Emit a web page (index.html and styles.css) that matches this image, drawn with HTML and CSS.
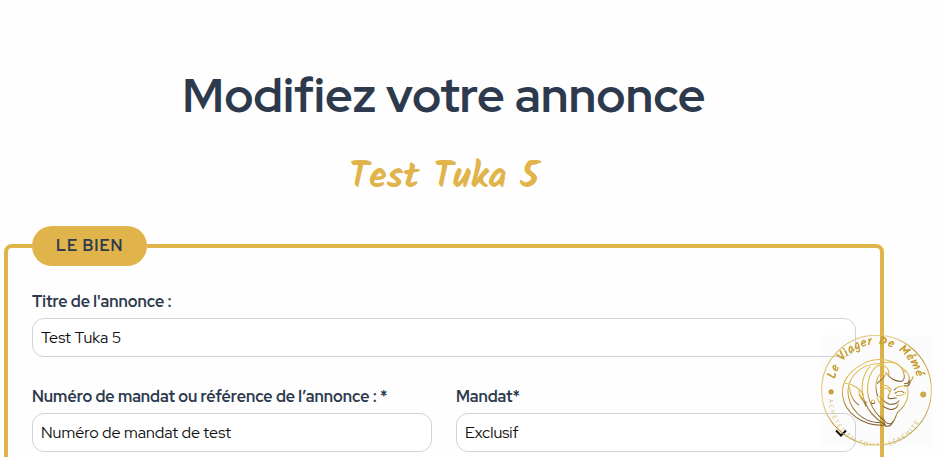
FILE: index.html
```html
<!DOCTYPE html>
<html lang="fr">
<head>
<meta charset="utf-8">
<meta name="viewport" content="width=device-width, initial-scale=1">
<title>Modifiez votre annonce</title>
<link rel="stylesheet" href="styles.css">
</head>
<body>
<main class="page">
  <h1 class="title">Modifiez votre annonce</h1>
  <h2 class="subtitle">Test Tuka 5</h2>
  <form>
    <fieldset class="section">
      <legend class="badge">LE BIEN</legend>
      <div class="grid">
        <div class="field wide">
          <label for="titre">Titre de l'annonce :</label>
          <input class="control" id="titre" type="text" value="Test Tuka 5">
        </div>
        <div class="field">
          <label for="numero">Numéro de mandat ou référence de l’annonce : *</label>
          <input class="control" id="numero" type="text" value="Numéro de mandat de test">
        </div>
        <div class="field">
          <label for="mandat">Mandat*</label>
          <div class="picker">
            <select class="control" id="mandat"><option>Exclusif</option><option>Simple</option></select>
            <svg class="chevron" viewBox="0 0 12 8" aria-hidden="true"><path d="M1 1.5 L6 6.5 L11 1.5"/></svg>
          </div>
        </div>
      </div>
    </fieldset>
  </form>
</main>
<svg class="logo" viewBox="34 33 330 330" role="img" aria-label="Le Viager De Mémé">
  <defs>
    <linearGradient id="gold" x1="0" y1="0" x2="1" y2="1">
      <stop offset="0" stop-color="#c9a63a"/><stop offset=".3" stop-color="#ead080"/>
      <stop offset=".5" stop-color="#b58a25"/><stop offset=".75" stop-color="#e2c45f"/><stop offset="1" stop-color="#8f7436"/>
    </linearGradient>
    <linearGradient id="shade" x1="0" y1="0" x2="0" y2="1">
      <stop offset="0" stop-color="#dfc05a"/><stop offset=".45" stop-color="#d8ad3c"/><stop offset="1" stop-color="#705020"/>
    </linearGradient>
    <path id="top" d="M77 165 A122 122 0 0 1 319 204"/>
    <path id="bottom" d="M57 224 A143 143 0 0 0 343 224"/>
  </defs>
  <circle cx="199" cy="197" r="163" fill="none" stroke="url(#gold)" stroke-width="3"/>
  <circle cx="64" cy="202" r="8" fill="#c4a23f"/>
  <circle cx="338" cy="210" r="9" fill="#c9a94b"/>
  <text class="logo-name"><textPath href="#top">Le Viager De Mémé</textPath></text>
  <text class="logo-motto"><textPath href="#bottom">ACHETEZ EN TOUTE SÉRÉNITÉ</textPath></text>
  <g fill="none" stroke="url(#shade)" stroke-width="3" stroke-linecap="round" stroke-linejoin="round">
    <path d="M284 142 C262 108 206 94 160 118 C116 140 94 174 98 212 C104 264 156 304 222 301"/>
    <path d="M214 118 C158 116 116 152 114 199 C114 252 158 294 210 294"/>
    <path d="M103 176 C128 178 150 192 160 210 M118 188 C120 208 130 232 146 240"/>
    <path d="M180 126 C156 150 148 198 166 236 C176 260 196 282 224 300"/>
    <path d="M204 122 C174 144 164 194 180 232 C188 254 204 274 222 288"/>
    <path d="M148 196 C144 214 154 228 170 234 M150 210 L168 244"/>
    <path d="M204 126 C220 108 258 110 274 132 C284 148 284 164 276 170 C258 174 238 162 226 144"/>
    <path d="M210 124 C230 122 238 138 236 152 M226 150 C220 166 208 168 202 176"/>
    <path d="M274 132 C294 142 302 160 292 178 M282 178 C296 176 306 168 308 156 M282 184 C296 188 302 174 296 168"/>
    <path d="M208 150 C196 166 194 192 202 214"/>
    <path d="M214 186 C220 180 230 182 240 192 M252 196 C262 186 274 182 288 186"/>
    <path d="M218 194 C226 188 236 192 238 200 M254 206 C262 200 274 198 280 204"/>
    <path d="M244 194 C240 204 230 214 234 220 C240 226 250 220 258 220"/>
    <path d="M206 216 C214 220 220 232 236 238 C248 240 260 238 266 228 M258 212 C270 214 280 212 286 204"/>
    <path d="M200 218 C206 234 220 250 238 254 C250 256 260 250 264 238"/>
    <path d="M290 184 C298 212 288 242 264 260 C256 266 258 284 244 296 C234 300 222 292 220 282"/>
    <path d="M214 238 C210 256 216 280 226 304 C236 306 244 300 248 290"/>
    <path d="M188 226 C180 230 184 240 192 236 C196 232 194 226 188 226"/>
  </g>
</svg>
</body>
</html>
```

FILE: styles.css
```css
* { box-sizing: border-box; }
html { scrollbar-width: none; }
body {
  margin: 0;
  background: #fefefe;
  color: #2d3a4e;
  font-family: "Red Hat Display", "Red Hat Text", Inter, sans-serif;
  font-size: 16px;
  line-height: 24px;
}
.page { padding: 67px 59px 24px 4px; }
.title {
  margin: 0;
  font-size: 48px;
  font-weight: 700;
  line-height: 56px;
  text-align: center;
}
.subtitle {
  margin: 28px 0 21px;
  color: #e0b44a;
  font-family: Kalam, Lato, cursive;
  font-size: 36px;
  font-weight: 700;
  line-height: 54px;
  text-align: center;
}
.section {
  min-width: 0;
  margin: 0;
  padding: 24px;
  border: 4px solid #e0b44a;
  border-radius: 8px;
}
.badge {
  padding: 8px 24px;
  border-radius: 20px;
  background: #e0b44a;
  font-weight: 700;
  letter-spacing: 1px;
}
.grid {
  display: grid;
  grid-template-columns: 1fr 1fr;
  gap: 28px 24px;
}
.field {
  display: flex;
  flex-direction: column;
  gap: 4px;
  min-width: 0;
}
.wide { grid-column: 1 / -1; }
.field label {
  font-weight: 700;
  white-space: nowrap;
}
.control {
  width: 100%;
  height: 39px;
  padding: 0 8px;
  border: 1px solid #d1d3db;
  border-radius: 12px;
  background: #fff;
  color: #111;
  font: inherit;
  appearance: none;
}
.picker { position: relative; }
.chevron {
  position: absolute;
  top: 16px;
  right: 9px;
  width: 12px;
  height: 8px;
  fill: none;
  stroke: #111;
  stroke-width: 2;
}
.logo {
  position: fixed;
  right: 11px;
  bottom: 11px;
  width: 111px;
  height: 111px;
  background: rgba(0, 0, 0, 0.012);
}
.logo-name {
  fill: #c6a038;
  font-family: Kalam, Lato, cursive;
  font-size: 38px;
  font-weight: 700;
  letter-spacing: 1px;
}
.logo-motto {
  fill: #d3bf82;
  font-family: Lato, sans-serif;
  font-size: 18px;
  letter-spacing: 5px;
}
```
